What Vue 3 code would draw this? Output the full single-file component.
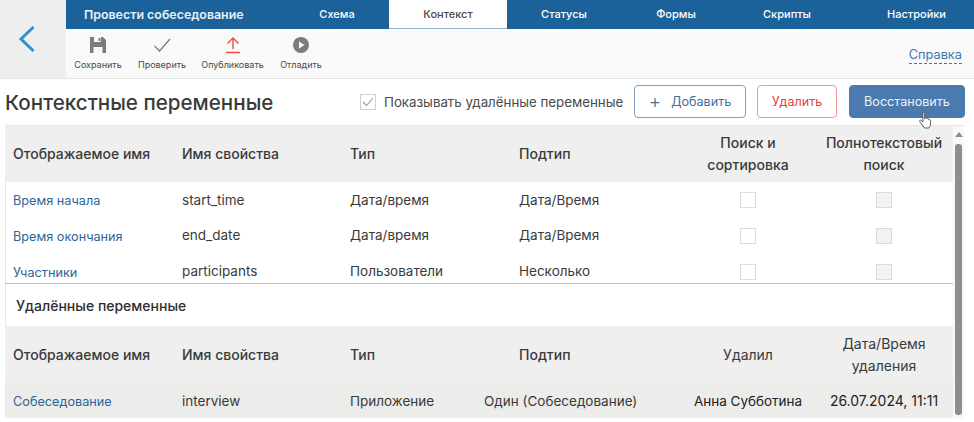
<script setup>
const tabs = ["Схема", "Контекст", "Статусы", "Формы", "Скрипты", "Настройки"];

const columns = ["Отображаемое имя", "Имя свойства", "Тип", "Подтип"];

const rows = [
  { title: "Время начала", code: "start_time", type: "Дата/время", subtype: "Дата/Время" },
  { title: "Время окончания", code: "end_date", type: "Дата/время", subtype: "Дата/Время" },
  { title: "Участники", code: "participants", type: "Пользователи", subtype: "Несколько" },
];
</script>

<template>
  <div class="page">
    <header class="top">
      <div class="back">
        <svg width="18" height="28" viewBox="0 0 18 28">
          <path d="M15.500 2 L3 14 L15.500 26" fill="none" stroke="#2f8fd0" stroke-width="3" />
        </svg>
      </div>
      <div class="top__main">
        <nav class="tabs">
          <span class="tabs__title">Провести собеседование</span>
          <span
            v-for="(tab, i) in tabs"
            :key="tab"
            class="tab"
            :class="{ 'tab--active': i === 1 }"
          >{{ tab }}</span>
        </nav>
        <div class="tools">
          <div class="tool tool--save">
            <svg width="18" height="18" viewBox="0 0 18 18">
              <path fill="#7c7c7c" d="M1 1h13l3 3v13H1z" />
              <path fill="#f9f9f9" d="M5 1h7v5H5zM4.500 11h9v6h-9z" />
              <path fill="#7c7c7c" d="M9.500 2h2v3h-2z" />
            </svg>
            <span>Сохранить</span>
          </div>
          <div class="tool tool--check">
            <svg width="18" height="18" viewBox="0 0 18 18">
              <path d="M1.500 10 L6.500 15 L17 3" fill="none" stroke="#7c7c7c" stroke-width="1.200" />
            </svg>
            <span>Проверить</span>
          </div>
          <div class="tool tool--publish">
            <svg width="18" height="18" viewBox="0 0 18 18">
              <path d="M9 13V2M3.500 7.500 L9 2 L14.500 7.500M2 16.500h14" fill="none" stroke="#ee4b45" stroke-width="1.400" />
            </svg>
            <span>Опубликовать</span>
          </div>
          <div class="tool tool--debug">
            <svg width="18" height="18" viewBox="0 0 18 18">
              <circle cx="9" cy="9" r="8" fill="#7c7c7c" />
              <path d="M7 5.500 L12.500 9 L7 12.500z" fill="#f9f9f9" />
            </svg>
            <span>Отладить</span>
          </div>
          <a class="help">Справка</a>
        </div>
      </div>
    </header>

    <div class="head">
      <h1>Контекстные переменные</h1>
      <label class="show-deleted">
        <span class="show-deleted__box">
          <svg width="12" height="10" viewBox="0 0 12 10">
            <path d="M1 5 L4.500 8.500 L11 1" fill="none" stroke="#7f9fbf" stroke-width="1.100" />
          </svg>
        </span>
        Показывать удалённые переменные
      </label>
      <button class="btn btn--add"><span class="btn__plus">+</span>Добавить</button>
      <button class="btn btn--del">Удалить</button>
      <button class="btn btn--restore">Восстановить</button>
    </div>

    <div class="panel">
      <div class="panel__body">
        <div class="grid grid--head">
          <div v-for="c in columns" :key="c">{{ c }}</div>
          <div class="center">Поиск и<br />сортировка</div>
          <div class="center">Полнотекстовый<br />поиск</div>
        </div>
        <div v-for="r in rows" :key="r.code" class="grid grid--row">
          <a class="link">{{ r.title }}</a>
          <div>{{ r.code }}</div>
          <div>{{ r.type }}</div>
          <div>{{ r.subtype }}</div>
          <div class="center"><span class="check"></span></div>
          <div class="center"><span class="check check--off"></span></div>
        </div>

        <div class="deleted-title">Удалённые переменные</div>

        <div class="grid grid--head grid--head-2">
          <div v-for="c in columns" :key="c">{{ c }}</div>
          <div class="center">Удалил</div>
          <div class="center">Дата/Время<br />удаления</div>
        </div>
        <div class="grid grid--row grid--deleted">
          <a class="link">Собеседование</a>
          <div>interview</div>
          <div>Приложение</div>
          <div class="subtype-wide">Один (Собеседование)</div>
          <div class="center dark name">Анна Субботина</div>
          <div class="center dark date">26.07.2024, 11:11</div>
        </div>
      </div>
      <div class="scroll">
        <span class="scroll__up"></span>
        <span class="scroll__thumb"></span>
      </div>
    </div>

    <svg class="cursor" width="16" height="19" viewBox="0 0 16 19">
      <path
        d="M5 1.500c.8-.6 1.700 0 1.700 1V8l.3-1.500c.6-.6 1.500-.4 1.700.4l.1.800c.5-.6 1.500-.4 1.700.4l.1.600c.6-.5 1.600-.2 1.700.7l.2 3.500c0 1.800-.8 3-1.600 4.100H6.500L2.700 12c-.8-1-1.500-2-.9-2.600.6-.6 1.500-.1 2.100.6l1 1.100V2.500c0-.4 0-.8.100-1z"
        fill="#fff"
        stroke="#4a4a4a"
        stroke-width="0.900"
      />
    </svg>
  </div>
</template>

<style>
html,
body {
  margin: 0;
  background: #fff;
}
</style>

<style scoped>
.page {
  position: relative;
  width: 974px;
  height: 422px;
  overflow: hidden;
  font-family: Inter, "Liberation Sans", sans-serif;
  color: #3a3a3a;
}

.top {
  display: flex;
  height: 79px;
  box-sizing: border-box;
  border-bottom: 1px solid #e6e6e6;
}

.back {
  flex: none;
  width: 66px;
  background: #eeeeee;
  padding: 25px 0 0 18px;
  box-sizing: border-box;
}

.top__main {
  flex: 1;
  min-width: 0;
  display: flex;
  flex-direction: column;
}

.tabs {
  height: 29px;
  flex: none;
  display: flex;
  align-items: stretch;
  background: #1a6299;
  color: #fff;
  font-size: 11px;
  font-weight: 500;
}

.tabs__title {
  box-sizing: border-box;
  font-size: 12.400px;
  font-weight: 600;
  line-height: 29px;
  padding-left: 18px;
  width: 219px;
  color: #e9f1f7;
  white-space: nowrap;
}

.tab {
  text-align: center;
  line-height: 28px;
  box-sizing: border-box;
}
.tab:nth-child(2) { width: 104px; }
.tab:nth-child(3) { width: 118px; }
.tab:nth-child(4) { width: 114px; }
.tab:nth-child(5) { width: 110px; }
.tab:nth-child(6) { width: 112px; }
.tab:nth-child(7) { width: 131px; text-align: right; padding-right: 28px; }

.tab--active {
  background: #fff;
  color: #4a4a4a;
  border-bottom: 1px solid #8fb2cf;
}

.tools {
  flex: 1;
  display: flex;
  background: #f9f9f9;
  font-size: 9px;
  color: #4a4a4a;
}

.tool {
  display: flex;
  flex-direction: column;
  align-items: center;
  padding-top: 7px;
  gap: 5px;
}
.tool svg { display: block; }
.tool--save { margin-left: 8px; width: 48px; }
.tool--check { margin-left: 16px; width: 48px; }
.tool--publish { margin-left: 15px; width: 63px; }
.tool--debug { margin-left: 16px; width: 42px; }

.help {
  margin-left: auto;
  margin-right: 12px;
  margin-top: 18px;
  align-self: flex-start;
  font-size: 12.800px;
  line-height: 16px;
  color: #3f78ab;
  border-bottom: 1px dashed #3f78ab;
}

.head {
  height: 46px;
  display: flex;
  align-items: center;
  padding-left: 5px;
  box-sizing: border-box;
}

h1 {
  margin: 0;
  width: 355px;
  font-size: 20.600px;
  font-weight: 500;
  color: #3a3a3a;
  white-space: nowrap;
}

.show-deleted {
  display: flex;
  align-items: center;
  gap: 8px;
  width: 274px;
  font-size: 13.300px;
  color: #4a4a4a;
  margin-top: -1px;
  white-space: nowrap;
}

.show-deleted__box {
  width: 14px;
  height: 14px;
  border: 1px solid #cfcfcf;
  display: flex;
  align-items: center;
  justify-content: center;
}

.btn {
  height: 33px;
  box-sizing: border-box;
  margin-top: -1px;
  border-radius: 4px;
  font-family: inherit;
  font-size: 12.600px;
  background: #fff;
  padding: 0;
}
.btn--add {
  width: 112px;
  border: 1px solid #7f9fbf;
  color: #3f6f9f;
}
.btn__plus {
  font-size: 19px;
  font-weight: 300;
  line-height: 1;
  margin-right: 10px;
  vertical-align: -2px;
}
.btn--del {
  width: 80px;
  margin-left: 11px;
  border: 1px solid #ee9a96;
  color: #e0423c;
}
.btn--restore {
  width: 116px;
  margin-left: 12px;
  border: 1px solid #4a7aae;
  background: #4a7aae;
  color: #eef3f8;
}

.panel {
  display: flex;
  width: 959px;
  height: 293px;
  margin-left: 5px;
  border-top: 1px solid #e6e6e6;
  border-left: 1px solid #e6e6e6;
  box-sizing: border-box;
}

.panel__body {
  width: 947px;
  flex: none;
  font-size: 13.500px;
}

.grid {
  display: grid;
  grid-template-columns: 169px 168px 169px 169px 136px 136px;
  align-items: center;
  margin-left: -1px;
}
.grid > * {
  padding-left: 8px;
  min-width: 0;
  white-space: nowrap;
}
.grid > .center {
  padding-left: 0;
  text-align: center;
}

.grid--head {
  height: 56px;
  background: #efefef;
  font-size: 14px;
  font-weight: 500;
  line-height: 22px;
  color: #3a3a3a;
}
.grid--head-2 {
  height: 57px;
}
.grid--head-2 > .center {
  font-weight: 400;
}

.grid--row {
  height: 35.500px;
  color: #3a3a3a;
}
.grid--row:nth-child(4) {
  height: 31px;
  padding-top: 6px;
  border-bottom: 1px solid #bdbdbd;
  box-sizing: border-box;
}

.grid--deleted {
  height: 35px;
  background: #ececea;
}

.link {
  color: #2f6496;
  font-size: 12.700px;
  padding-top: 2px;
}

.check {
  display: inline-block;
  width: 14px;
  height: 14px;
  border: 1px solid #dcdcdc;
  background: #fff;
  vertical-align: middle;
}
.check--off {
  background: #f2f2f2;
}

.deleted-title {
  height: 42px;
  line-height: 43px;
  padding-left: 10px;
  font-size: 14px;
  font-weight: 500;
  color: #2e2e2e;
}

.subtype-wide {
  margin-left: -35px;
}
.dark {
  color: #222;
}
.name {
  font-size: 13.500px;
}
.date {
  font-size: 14px;
}

.scroll {
  width: 11px;
  flex: none;
  background: #f8f8f8;
  display: flex;
  flex-direction: column;
  align-items: center;
}
.scroll__up {
  width: 0;
  height: 0;
  margin-top: 6px;
  border-left: 4px solid transparent;
  border-right: 4px solid transparent;
  border-bottom: 5px solid #8e8e8e;
}
.scroll__thumb {
  width: 7px;
  height: 271px;
  margin-top: 7px;
  border-radius: 3px;
  background: #8e8e8e;
}

.cursor {
  position: absolute;
  left: 918px;
  top: 111px;
}
</style>
